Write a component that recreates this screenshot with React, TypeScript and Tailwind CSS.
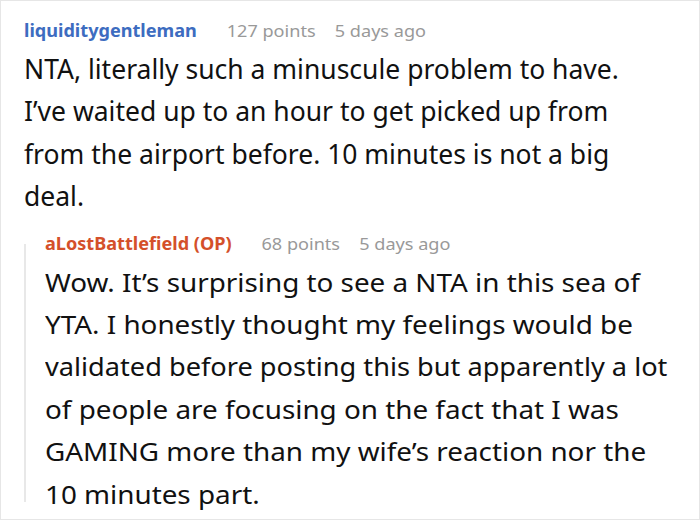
const parentLines = [
  "NTA, literally such a minuscule problem to have.",
  "I’ve waited up to an hour to get picked up from",
  "from the airport before. 10 minutes is not a big",
  "deal.",
];

const replyLines = [
  "Wow. It’s surprising to see a NTA in this sea of",
  "YTA. I honestly thought my feelings would be",
  "validated before posting this but apparently a lot",
  "of people are focusing on the fact that I was",
  "GAMING more than my wife’s reaction nor the",
  "10 minutes part.",
];

const Meta = ({ name, color, points }: { name: string; color: string; points: string }) => (
  <div className="flex items-baseline whitespace-nowrap text-[17px] leading-[24px] origin-left scale-x-[1.065]">
    <span className={`font-bold ${color}`}>{name}</span>
    <span className="ml-[28px] text-[#999999]">{points}</span>
    <span className="ml-[18px] text-[#999999]">5 days ago</span>
  </div>
);

export default function App() {
  return (
    <div
      className="w-[700px] h-[520px] overflow-hidden bg-white border border-[#e6e6e6] text-[#111111] pl-[23px] pt-[18px]"
      style={{ fontFamily: '"Noto Sans", "Open Sans", sans-serif' }}
    >
      <Meta name="liquiditygentleman" color="text-[#3d6cc0]" points="127 points" />
      <div className="mt-[5px] text-[26.5px] leading-[42.4px]">
        {parentLines.map((l) => (
          <div key={l} className="whitespace-nowrap">
            {l}
          </div>
        ))}
      </div>
      <div className="mt-[14px] flex">
        <div className="mt-[12px] h-[258px] w-[2px] shrink-0 bg-[#e8e8e8]" />
        <div className="ml-[19px]">
          <Meta name="aLostBattlefield (OP)" color="text-[#d4502a]" points="68 points" />
          <div className="mt-[5px] text-[26px] leading-[42.4px]">
            {replyLines.map((l, i) => (
              <div
                key={l}
                className={
                  i === 2
                    ? "whitespace-nowrap origin-left scale-x-[1.045]"
                    : "whitespace-nowrap origin-left scale-x-[1.07]"
                }
              >
                {l}
              </div>
            ))}
          </div>
        </div>
      </div>
    </div>
  );
}
